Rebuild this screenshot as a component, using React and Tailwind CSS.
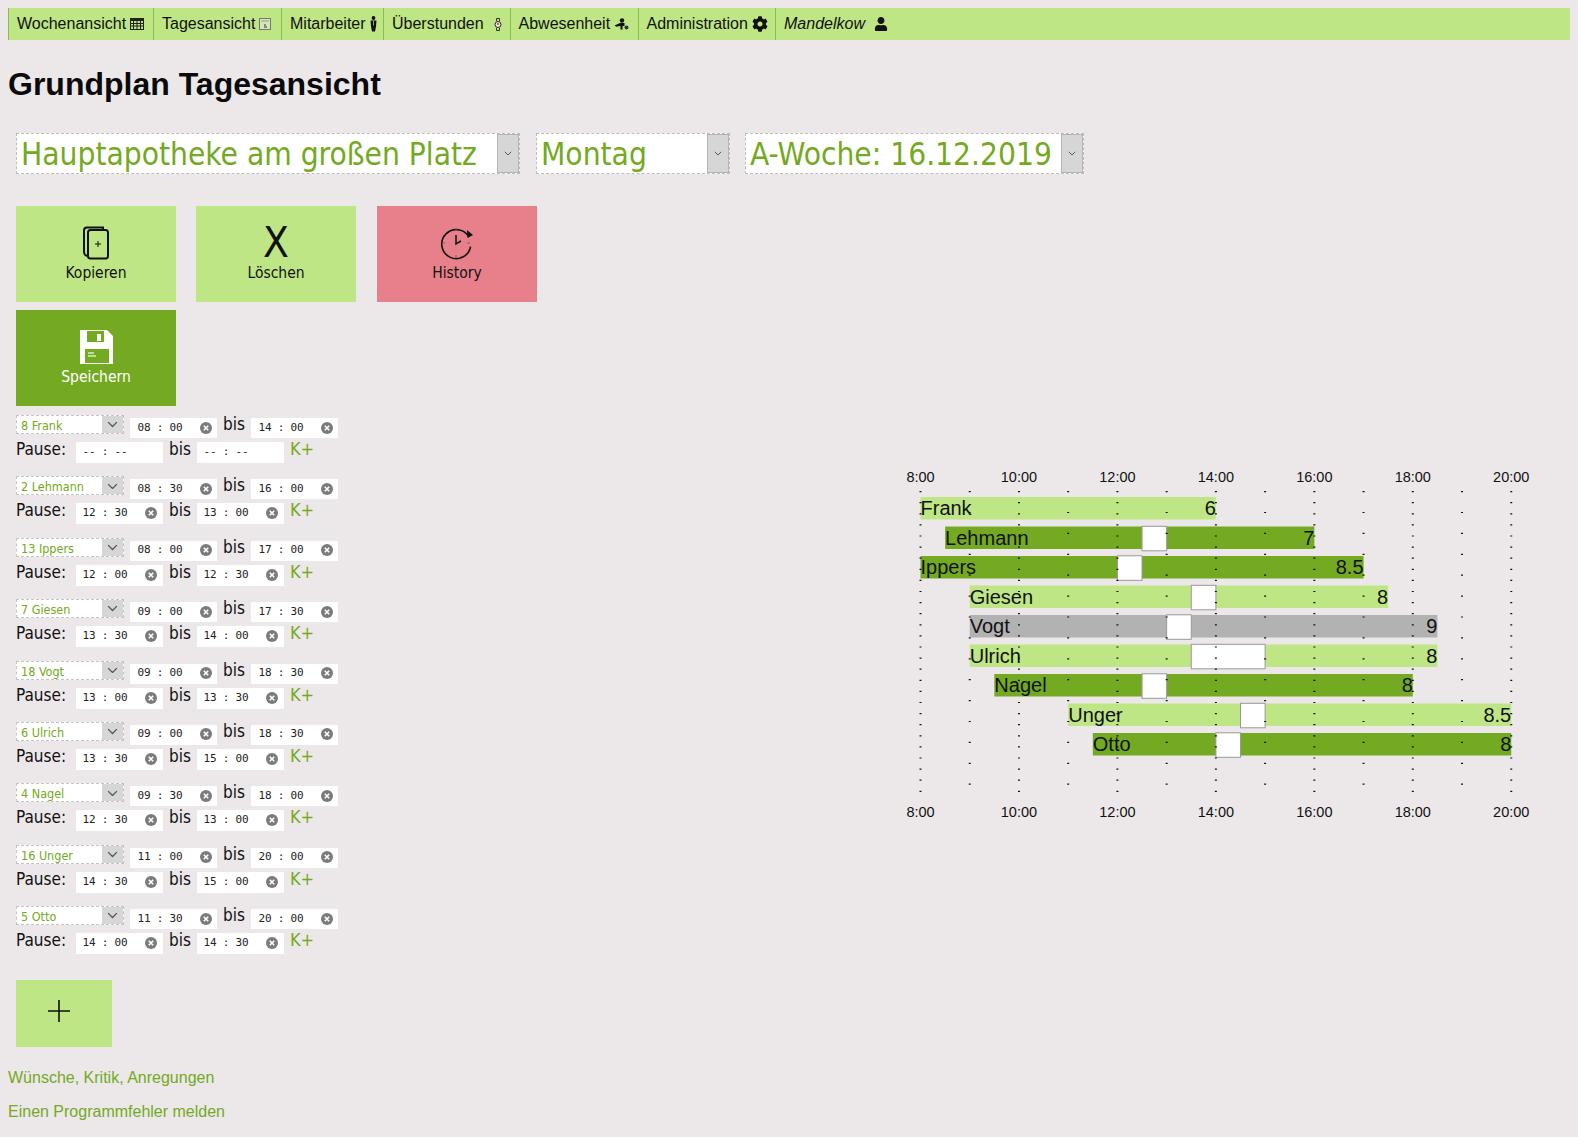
import React from "react";
import { FaCog, FaUser } from "react-icons/fa";

const LIGHT = "#bfe684";
const DARK = "#73aa21";

const CalendarIcon = () => (
  <svg width="14" height="12" viewBox="0 0 14 12" className="ml-1">
    <rect x="0.5" y="0.5" width="13" height="11" fill="none" stroke="#222" />
    <rect x="0" y="0" width="14" height="3" fill="#222" />
    <path d="M0 5.5H14M0 8H14M3.5 3V12M7 3V12M10.5 3V12" stroke="#222" strokeWidth="1" />
  </svg>
);
const DayIcon = () => (
  <svg width="12" height="12" viewBox="0 0 12 12" className="ml-1">
    <rect x="0.5" y="0.5" width="11" height="11" fill="#d3e8b5" stroke="#777" />
    <path d="M2 3H10" stroke="#999" />
    <path d="M5 7h2M5 9h3" stroke="#333" />
  </svg>
);
const PersonIcon = () => (
  <svg width="7" height="16" viewBox="0 0 7 16" className="ml-1">
    <circle cx="3.5" cy="2" r="1.9" fill="#111" />
    <path d="M0.5 4.5H6.5L6 10.5L5 15.5H2L1 10.5Z" fill="#111" />
    <path d="M3.5 5V9.5" stroke="#bfe684" strokeWidth="0.7" />
  </svg>
);
const WatchIcon = () => (
  <svg width="8" height="13" viewBox="0 0 8 13" className="ml-2.5">
    <path d="M2.5 0.5H5.5V3M2.5 0.5V3M2.5 10V12.5H5.5V10" stroke="#333" fill="none" />
    <circle cx="4" cy="6.5" r="3" fill="#e8efe0" stroke="#222" />
    <circle cx="4" cy="6" r="1.1" fill="#d9342b" />
  </svg>
);
const AbsenceIcon = () => (
  <svg width="15" height="12" viewBox="0 0 15 12" className="ml-1">
    <circle cx="8" cy="2.5" r="2.2" fill="#111" />
    <path d="M0.5 7.5L6 5H10.5V8H6L2.5 8.8Z" fill="#111" />
    <path d="M7.5 7V11.5" stroke="#111" strokeWidth="2.2" />
    <circle cx="12.5" cy="9.5" r="2" fill="#333" />
  </svg>
);

const navItems = [
  { label: "Wochenansicht", cell: "w-[145px]", icon: <CalendarIcon /> },
  { label: "Tagesansicht", cell: "w-[128px]", icon: <DayIcon /> },
  { label: "Mitarbeiter", cell: "w-[102px]", icon: <PersonIcon /> },
  { label: "Überstunden", cell: "w-[126.5px]", icon: <WatchIcon /> },
  { label: "Abwesenheit", cell: "w-[128px]", icon: <AbsenceIcon /> },
  { label: "Administration", cell: "w-[137.5px]", icon: <FaCog className="ml-1 text-[16px] text-[#111]" /> },
];

const rows = [
  { id: "8 Frank", name: "Frank", from: "08 : 00", to: "14 : 00", pauseFrom: "-- : --", pauseTo: "-- : --" },
  { id: "2 Lehmann", name: "Lehmann", from: "08 : 30", to: "16 : 00", pauseFrom: "12 : 30", pauseTo: "13 : 00" },
  { id: "13 Ippers", name: "Ippers", from: "08 : 00", to: "17 : 00", pauseFrom: "12 : 00", pauseTo: "12 : 30" },
  { id: "7 Giesen", name: "Giesen", from: "09 : 00", to: "17 : 30", pauseFrom: "13 : 30", pauseTo: "14 : 00" },
  { id: "18 Vogt", name: "Vogt", from: "09 : 00", to: "18 : 30", pauseFrom: "13 : 00", pauseTo: "13 : 30" },
  { id: "6 Ulrich", name: "Ulrich", from: "09 : 00", to: "18 : 30", pauseFrom: "13 : 30", pauseTo: "15 : 00" },
  { id: "4 Nagel", name: "Nagel", from: "09 : 30", to: "18 : 00", pauseFrom: "12 : 30", pauseTo: "13 : 00" },
  { id: "16 Unger", name: "Unger", from: "11 : 00", to: "20 : 00", pauseFrom: "14 : 30", pauseTo: "15 : 00" },
  { id: "5 Otto", name: "Otto", from: "11 : 30", to: "20 : 00", pauseFrom: "14 : 00", pauseTo: "14 : 30" },
];

const bars = [
  { name: "Frank", start: 8, end: 14, pause: null, hours: "6", color: LIGHT },
  { name: "Lehmann", start: 8.5, end: 16, pause: [12.5, 13], hours: "7", color: DARK },
  { name: "Ippers", start: 8, end: 17, pause: [12, 12.5], hours: "8.5", color: DARK },
  { name: "Giesen", start: 9, end: 17.5, pause: [13.5, 14], hours: "8", color: LIGHT },
  { name: "Vogt", start: 9, end: 18.5, pause: [13, 13.5], hours: "9", color: "#b2b2b2" },
  { name: "Ulrich", start: 9, end: 18.5, pause: [13.5, 15], hours: "8", color: LIGHT },
  { name: "Nagel", start: 9.5, end: 18, pause: [12.5, 13], hours: "8", color: DARK },
  { name: "Unger", start: 11, end: 20, pause: [14.5, 15], hours: "8.5", color: LIGHT },
  { name: "Otto", start: 11.5, end: 20, pause: [14, 14.5], hours: "8", color: DARK },
];

const ClearIcon = () => (
  <svg width="12" height="12" viewBox="0 0 12 12" className="shrink-0">
    <circle cx="6" cy="6" r="6" fill="#7b7b7b" />
    <path d="M3.8 3.8L8.2 8.2M8.2 3.8L3.8 8.2" stroke="#fff" strokeWidth="1.6" />
  </svg>
);

const TimeField = ({ value, pause, className }) => (
  <div className={`flex w-[87px] items-center bg-white pb-px ${pause ? "h-[21px] pl-[6.5px] pr-[6.5px]" : "h-[20px] pl-[7.5px] pr-[5.5px]"} ${className}`}>
    <span className="flex-1 whitespace-pre font-['DejaVu_Sans_Mono',monospace] text-[11px] tracking-[-0.2px] text-[#222]">{value}</span>
    {value !== "-- : --" && <ClearIcon />}
  </div>
);

const Chevron = ({ size = 8 }) => (
  <svg width={size} height={size * 0.6} viewBox="0 0 10 6">
    <path d="M1 1L5 5L9 1" fill="none" stroke="#555" strokeWidth="1.2" />
  </svg>
);

const BigSelect = ({ text, className }) => (
  <div className={`flex h-[41px] items-stretch border border-dashed border-[#bdbdbd] bg-white ${className}`}>
    <span className="flex-1 whitespace-pre pl-[4px] font-['DejaVu_Sans',sans-serif] text-[31.4px] leading-[40px] text-[#73aa21] [font-stretch:condensed]">{text}</span>
    <span className="flex w-[22px] items-center justify-center border border-[#b5b5b5] bg-[#d6d6d6]">
      <Chevron />
    </span>
  </div>
);

const ActionButton = ({ label, icon, className }) => (
  <button type="button" className={`flex h-[96px] w-[160px] flex-col items-center justify-start pt-[19px] font-['DejaVu_Sans',sans-serif] text-[15.5px] leading-[20px] [font-stretch:condensed] ${className}`}>
    <span className="flex h-[36px] items-center justify-center">{icon}</span>
    <span className="mt-[2px]">{label}</span>
  </button>
);

const EmployeeRow = ({ row }) => (
  <div className="h-[61.4px] font-['DejaVu_Sans',sans-serif] text-[17px] leading-[18px] text-[#111] [font-stretch:condensed]">
    <div className="flex h-[27px] items-start">
      <div className="flex h-[19px] w-[108px] items-stretch border border-dashed border-[#c4c4c4] bg-white">
        <span className="flex-1 pl-[4px] text-[12.5px] leading-[20px] text-[#73aa21]">{row.id}</span>
        <span className="flex w-[21px] items-center justify-center bg-[#d6d6d6]">
          <Chevron size={11} />
        </span>
      </div>
      <TimeField value={row.from} className="ml-[6px] mt-[3px]" />
      <span className="ml-[6px] w-[28px]">bis</span>
      <TimeField value={row.to} className="mt-[3px]" />
    </div>
    <div className="flex items-start">
      <span className="-mt-[2px] w-[60px]">Pause:</span>
      <TimeField value={row.pauseFrom} pause />
      <span className="-mt-[2px] ml-[6px] w-[28px]">bis</span>
      <TimeField value={row.pauseTo} pause />
      <span className="-mt-[2px] ml-[6px] text-[18px] text-[#73aa21]">K+</span>
    </div>
  </div>
);

// chart coordinates: origin is the left edge of the svg at page x=905, y=460
const HOUR = 49.23;
const X0 = 15.5;
const BAR_TOP = 37;
const BAR_PITCH = 29.5;
const hx = (h) => X0 + (h - 8) * HOUR;

const ShiftChart = () => {
  const hours = [8, 9, 10, 11, 12, 13, 14, 15, 16, 17, 18, 19, 20];
  const labels = [8, 10, 12, 14, 16, 18, 20];
  return (
    <svg width="640" height="365" viewBox="0 0 640 365" className="block font-['Liberation_Sans',sans-serif]">
      {labels.map((h) => (
        <text key={`t${h}`} x={hx(h)} y="22" textAnchor="middle" fontSize="14.5" fill="#111">{h}:00</text>
      ))}
      {bars.map((b, i) => {
        const y = BAR_TOP + i * BAR_PITCH;
        return (
          <g key={b.name}>
            <rect x={hx(b.start)} y={y} width={(b.end - b.start) * HOUR} height="22.5" fill={b.color} />
            {b.pause && (
              <rect x={hx(b.pause[0])} y={y - 0.2} width={(b.pause[1] - b.pause[0]) * HOUR} height="24.5" fill="#fff" stroke="#999" strokeWidth="1" />
            )}
            <text x={hx(b.start)} y={y + 18} fontSize="20" fill="#111">{b.name}</text>
            <text x={hx(b.end)} y={y + 18} fontSize="20" fill="#111" textAnchor="end">{b.hours}</text>
          </g>
        );
      })}
      {hours.map((h) => (
        <line
          key={h}
          x1={hx(h)}
          x2={hx(h)}
          y1="31"
          y2={h % 2 === 0 ? 333 : 327}
          stroke="#111"
          strokeWidth="2"
          strokeDasharray={h % 2 === 0 ? "1.2 9.9" : "1.2 19.7"}
        />
      ))}
      {labels.map((h) => (
        <text key={`b${h}`} x={hx(h)} y="357" textAnchor="middle" fontSize="14.5" fill="#111">{h}:00</text>
      ))}
    </svg>
  );
};

export default function App() {
  return (
    <div className="min-h-[1137px] bg-[#ece8ea] px-2 pt-2 font-['Liberation_Sans',sans-serif] text-[#111]">
      <nav className="flex h-8 w-[1562px] items-stretch bg-[#bfe684] text-[16px] leading-[30px]">
        {navItems.map((item) => (
          <div key={item.label} className={`flex items-center border-l border-[#8cbf4a] pl-2 ${item.cell}`}>
            <span>{item.label}</span>
            {item.icon}
          </div>
        ))}
        <div className="flex items-center border-l border-[#8cbf4a] pl-2">
          <span className="italic">Mandelkow</span>
          <FaUser className="ml-[9px] text-[14px] text-[#111]" />
        </div>
      </nav>

      <h1 className="mt-[26px] text-[32px] font-bold leading-[37px] text-[#0a0a0a]">Grundplan Tagesansicht</h1>

      <div className="ml-2 mt-[30px] flex">
        <BigSelect text="Hauptapotheke am großen Platz" className="w-[504px]" />
        <BigSelect text="Montag" className="ml-[16px] w-[194px]" />
        <BigSelect text="A-Woche: 16.12.2019" className="ml-[15px] w-[339px]" />
      </div>

      <div className="ml-2 mt-[32px] flex gap-[20px]">
        <ActionButton
          label="Kopieren"
          className="bg-[#bfe684] text-[#111]"
          icon={
            <svg width="26" height="34" viewBox="0 0 26 34" fill="none" stroke="#111">
              <path d="M20 3V1.5H4Q1 1.5 1 4.5V26Q1 29 4 30" strokeWidth="2" />
              <rect x="5" y="4" width="20" height="28.5" rx="2.5" strokeWidth="2" />
              <path d="M12 18H18M15 15V21" strokeWidth="1" />
            </svg>
          }
        />
        <ActionButton
          label="Löschen"
          className="bg-[#bfe684] text-[#111]"
          icon={<span className="text-[42px] leading-[36px]">X</span>}
        />
        <ActionButton
          label="History"
          className="ml-px bg-[#e7808a] text-[#111]"
          icon={
            <svg width="34" height="34" viewBox="0 0 34 34" fill="none">
              <path d="M27 8A14.5 14.5 0 1 0 31 17" stroke="#111" strokeWidth="1.6" transform="rotate(14 16 17)" />
              <path d="M16 9V18L21 15" stroke="#111" strokeWidth="1.5" />
              <path d="M16 2V5M16 29V32M2 17H5M27 17H30" stroke="#8a5a5f" strokeWidth="1" />
              <path d="M27 4L33 9L27.5 12Z" fill="#111" />
            </svg>
          }
        />
      </div>

      <div className="ml-2 mt-2">
        <ActionButton
          label="Speichern"
          className="bg-[#73aa21] text-white"
          icon={
            <svg width="33" height="34" viewBox="0 0 33 34">
              <path d="M0 0H27L33 6V34H0Z" fill="#fff" />
              <rect x="7" y="1" width="17" height="11" fill="#73aa21" />
              <rect x="17" y="4" width="4" height="7" fill="#fff" />
              <rect x="5" y="19" width="24" height="14" fill="#73aa21" />
              <path d="M8 23H14M8 26H16" stroke="#dcecc4" strokeWidth="1.4" />
            </svg>
          }
        />
      </div>

      <div className="mt-[9px] flex">
        <div className="w-[897px] shrink-0 pl-2">
          {rows.map((row) => (
            <EmployeeRow key={row.id} row={row} />
          ))}
          <button type="button" className="mt-[12px] flex h-[67px] w-[96px] items-start bg-[#bfe684] pl-[32px] pt-[20px]">
            <svg width="22" height="22" viewBox="0 0 22 22">
              <path d="M0 11H22M11 0V22" stroke="#111" strokeWidth="1.6" />
            </svg>
          </button>
        </div>
        <div className="mt-[45px]">
          <ShiftChart />
        </div>
      </div>

      <p className="mt-[22px] text-[16px] leading-[18px] text-[#73aa21]">Wünsche, Kritik, Anregungen</p>
      <p className="mt-[16px] text-[16px] leading-[18px] text-[#73aa21]">Einen Programmfehler melden</p>
    </div>
  );
}
